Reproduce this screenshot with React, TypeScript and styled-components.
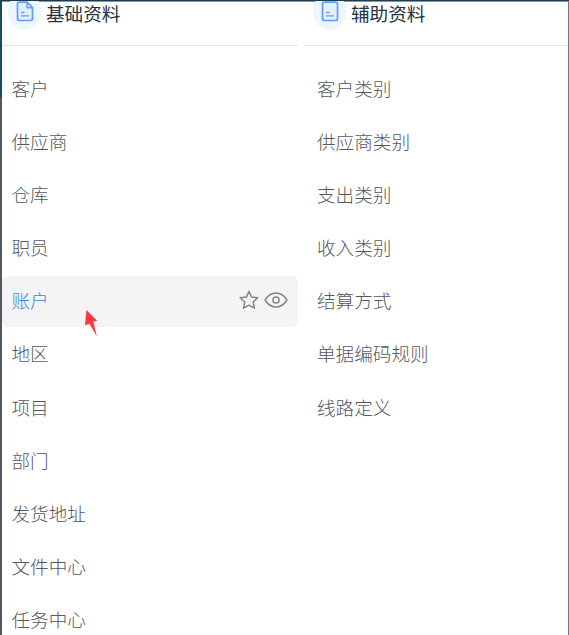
import React, { useState } from "react";
import styled, { createGlobalStyle, css } from "styled-components";

const GlobalStyle = createGlobalStyle`
  body {
    margin: 0;
    overflow: hidden;
    background: #fff;
    font-family: "Noto Sans CJK SC", sans-serif;
  }
`;

const basicItems = [
  "客户",
  "供应商",
  "仓库",
  "职员",
  "账户",
  "地区",
  "项目",
  "部门",
  "发货地址",
  "文件中心",
  "任务中心",
];

const auxiliaryItems = [
  "客户类别",
  "供应商类别",
  "支出类别",
  "收入类别",
  "结算方式",
  "单据编码规则",
  "线路定义",
];

const FileIcon = ({ folded }: { folded?: boolean }) => (
  <svg width="18" height="21" viewBox="0 0 18 21" fill="none">
    <path
      d={
        folded
          ? "M3 1.2H11L16.5 6.7V17.5Q16.5 19.5 14.5 19.5H3.5Q1.5 19.5 1.5 17.5V2.7Q1.5 1.2 3 1.2Z"
          : "M3.5 1.2H14.5Q16.5 1.2 16.5 3.2V17.5Q16.5 19.5 14.5 19.5H3.5Q1.5 19.5 1.5 17.5V3.2Q1.5 1.2 3.5 1.2Z"
      }
      fill="#e3eeff"
      stroke="#659cf5"
      strokeWidth="1.7"
      strokeLinejoin="round"
    />
    {folded && <path d="M11 1.2V6.7H16.5" stroke="#659cf5" strokeWidth="1.5" />}
    <path d="M5 11.5H8.5M5 14.8H13" stroke="#659cf5" strokeWidth="1.3" />
  </svg>
);

const StarIcon = () => (
  <svg width="20" height="20" viewBox="0 0 20 20" fill="none">
    <path
      d="M10 1.4L12.6 7.1L18.8 7.8L14.2 12L15.4 18.2L10 15.1L4.6 18.2L5.8 12L1.2 7.8L7.4 7.1Z"
      stroke="#85878b"
      strokeWidth="1.5"
      strokeLinejoin="round"
    />
  </svg>
);

const EyeIcon = () => (
  <svg width="24" height="20" viewBox="0 0 24 20" fill="none">
    <path
      d="M1 10Q5.5 3 12 3Q18.5 3 23 10Q18.5 17 12 17Q5.5 17 1 10Z"
      stroke="#85878b"
      strokeWidth="1.5"
      strokeLinejoin="round"
    />
    <circle cx="12" cy="10" r="3.1" stroke="#85878b" strokeWidth="1.5" />
  </svg>
);

export default function App() {
  const [active, setActive] = useState("账户");

  const renderItems = (items: string[]) =>
    items.map((item) => (
      <MenuItem
        key={item}
        $active={item === active}
        onClick={() => setActive(item)}
      >
        {item}
        {item === active && (
          <Actions>
            <StarIcon />
            <EyeIcon />
          </Actions>
        )}
      </MenuItem>
    ));

  return (
    <Frame>
      <GlobalStyle />
      <SideEdge />
      <Panel>
        <Column $width={296}>
          <ColumnHeader>
            <IconBadge>
              <FileIcon folded />
            </IconBadge>
            基础资料
          </ColumnHeader>
          <List>{renderItems(basicItems)}</List>
        </Column>
        <Column $inset={3}>
          <ColumnHeader>
            <IconBadge>
              <FileIcon />
            </IconBadge>
            辅助资料
          </ColumnHeader>
          <List>{renderItems(auxiliaryItems)}</List>
        </Column>
      </Panel>
      <Pointer width="16" height="30" viewBox="0 0 16 30">
        <path
          d="M2.4 1L13.2 11.8L9.3 12.6L12.8 27.6L5.6 14.8L1 16.2Z"
          fill="#f83a3e"
        />
      </Pointer>
    </Frame>
  );
}

const Frame = styled.div`
  position: relative;
  display: flex;
  box-sizing: border-box;
  height: 635px;
  overflow: hidden;
  border-top: 1px solid #1e3c50;
`;

const SideEdge = styled.div`
  flex: 0 0 2px;
  background: linear-gradient(#164a62 96px, #55585c 97px);
`;

const Panel = styled.div`
  flex: 1;
  display: flex;
  gap: 6px;
  min-width: 0;
  border-top: 1px solid #8297a3;
  border-right: 1px solid #58818f;
`;

const ColumnHeader = styled.div`
  display: flex;
  align-items: flex-end;
  gap: 5px;
  box-sizing: border-box;
  height: 44px;
  padding: 0 0 15px 6px;
  border-bottom: 1px solid #e2e3e5;
  color: #26323d;
  font-size: 18.6px;
  line-height: 35px;
`;

const IconBadge = styled.span`
  display: flex;
  align-items: center;
  justify-content: center;
  width: 33px;
  height: 38px;
  border-radius: 50%;
  background: #edf5ff;
`;

const List = styled.div`
  display: flex;
  flex-direction: column;
  gap: 2.2px;
  padding-top: 17px;
`;

const MenuItem = styled.div<{ $active: boolean }>`
  display: flex;
  align-items: center;
  justify-content: space-between;
  box-sizing: border-box;
  height: 51px;
  padding: 0 10px 3px 9.5px;
  border-radius: 6px;
  color: #55585d;
  font-size: 18.6px;
  font-weight: 300;
  white-space: nowrap;
  cursor: pointer;

  ${({ $active }) =>
    $active &&
    css`
      background: #f4f4f4;
      color: #3a86df;
    `}
`;

const Column = styled.div<{ $width?: number; $inset?: number }>`
  flex: ${({ $width }) => ($width ? `0 0 ${$width}px` : "1")};
  min-width: 0;

  ${({ $inset }) =>
    $inset &&
    css`
      ${ColumnHeader} {
        padding-left: ${6 + $inset}px;
      }
      ${MenuItem} {
        padding-left: ${10 + $inset}px;
      }
    `}
`;

const Actions = styled.span`
  display: flex;
  gap: 5px;
`;

const Pointer = styled.svg`
  position: absolute;
  top: 308px;
  left: 84px;
  pointer-events: none;
`;
